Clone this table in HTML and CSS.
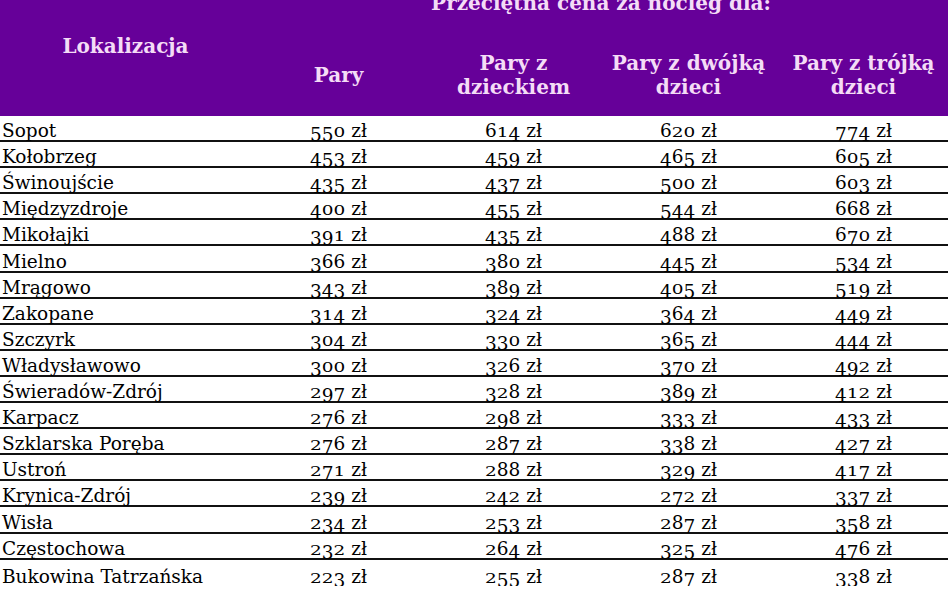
FILE: index.html
```html
<!DOCTYPE html>
<html lang="pl">
<head>
<meta charset="utf-8">
<title>Przeciętna cena za nocleg</title>
<link rel="stylesheet" href="styles.css">
</head>
<body>
<div class="sheet">
  <div class="head">
    <div class="loc">Lokalizacja</div>
    <div class="group">
      <div class="title">Przeciętna cena za nocleg dla:</div>
      <div class="subs">
        <div class="sub">Pary</div>
        <div class="sub">Pary z<br>dzieckiem</div>
        <div class="sub">Pary z dwójką<br>dzieci</div>
        <div class="sub">Pary z trójką<br>dzieci</div>
      </div>
    </div>
  </div>
  <div class="rows">
    <div class="row"><div class="name">Sopot</div><div class="num">550 zł</div><div class="num">614 zł</div><div class="num">620 zł</div><div class="num">774 zł</div></div>
    <div class="row"><div class="name">Kołobrzeg</div><div class="num">453 zł</div><div class="num">459 zł</div><div class="num">465 zł</div><div class="num">605 zł</div></div>
    <div class="row"><div class="name">Świnoujście</div><div class="num">435 zł</div><div class="num">437 zł</div><div class="num">500 zł</div><div class="num">603 zł</div></div>
    <div class="row"><div class="name">Międzyzdroje</div><div class="num">400 zł</div><div class="num">455 zł</div><div class="num">544 zł</div><div class="num">668 zł</div></div>
    <div class="row"><div class="name">Mikołajki</div><div class="num">391 zł</div><div class="num">435 zł</div><div class="num">488 zł</div><div class="num">670 zł</div></div>
    <div class="row"><div class="name">Mielno</div><div class="num">366 zł</div><div class="num">380 zł</div><div class="num">445 zł</div><div class="num">534 zł</div></div>
    <div class="row"><div class="name">Mrągowo</div><div class="num">343 zł</div><div class="num">389 zł</div><div class="num">405 zł</div><div class="num">519 zł</div></div>
    <div class="row"><div class="name">Zakopane</div><div class="num">314 zł</div><div class="num">324 zł</div><div class="num">364 zł</div><div class="num">449 zł</div></div>
    <div class="row"><div class="name">Szczyrk</div><div class="num">304 zł</div><div class="num">330 zł</div><div class="num">365 zł</div><div class="num">444 zł</div></div>
    <div class="row"><div class="name">Władysławowo</div><div class="num">300 zł</div><div class="num">326 zł</div><div class="num">370 zł</div><div class="num">492 zł</div></div>
    <div class="row"><div class="name">Świeradów-Zdrój</div><div class="num">297 zł</div><div class="num">328 zł</div><div class="num">389 zł</div><div class="num">412 zł</div></div>
    <div class="row"><div class="name">Karpacz</div><div class="num">276 zł</div><div class="num">298 zł</div><div class="num">333 zł</div><div class="num">433 zł</div></div>
    <div class="row"><div class="name">Szklarska Poręba</div><div class="num">276 zł</div><div class="num">287 zł</div><div class="num">338 zł</div><div class="num">427 zł</div></div>
    <div class="row"><div class="name">Ustroń</div><div class="num">271 zł</div><div class="num">288 zł</div><div class="num">329 zł</div><div class="num">417 zł</div></div>
    <div class="row"><div class="name">Krynica-Zdrój</div><div class="num">239 zł</div><div class="num">242 zł</div><div class="num">272 zł</div><div class="num">337 zł</div></div>
    <div class="row"><div class="name">Wisła</div><div class="num">234 zł</div><div class="num">253 zł</div><div class="num">287 zł</div><div class="num">358 zł</div></div>
    <div class="row"><div class="name">Częstochowa</div><div class="num">232 zł</div><div class="num">264 zł</div><div class="num">325 zł</div><div class="num">476 zł</div></div>
    <div class="row"><div class="name">Bukowina Tatrzańska</div><div class="num">223 zł</div><div class="num">255 zł</div><div class="num">287 zł</div><div class="num">338 zł</div></div>
  </div>
</div>
<script src="script.js"></script>
</body>
</html>
```
FILE: styles.css
```css
html, body {
  margin: 0;
  padding: 0;
  background: #ffffff;
}
body {
  overflow: hidden;
  font-family: "DejaVu Serif", "Liberation Serif", serif;
  color: #000000;
}
.sheet {
  width: 951px;
}
.head {
  display: grid;
  grid-template-columns: 251px 700px;
  background: #660099;
  color: #f4dcf6;
  font-weight: bold;
  font-size: 20px;
  margin-top: -24px;
  height: 140px;
}
.loc {
  display: flex;
  align-items: center;
  justify-content: center;
}
.group {
  display: grid;
  grid-template-rows: 54px 86px;
}
.title {
  display: flex;
  align-items: center;
  justify-content: center;
}
.subs {
  display: grid;
  grid-template-columns: repeat(4, 175px);
}
.sub {
  display: flex;
  align-items: center;
  justify-content: center;
  text-align: center;
  line-height: 24px;
  padding-top: 4px;
}
.row {
  display: grid;
  grid-template-columns: 251px repeat(4, 175px);
  height: 26.1px;
  box-sizing: border-box;
  border-bottom: 2px solid #111111;
  font-size: 18.5px;
  line-height: 19px;
  align-items: end;
}
.row:last-child {
  border-bottom: none;
}
.name {
  padding-left: 2px;
  white-space: nowrap;
}
.num {
  text-align: center;
  white-space: nowrap;
}
.d-low {
  display: inline-block;
  transform: scaleY(0.74);
  transform-origin: 50% 80%;
}
.d-desc {
  display: inline-block;
  transform: translateY(0.2em);
}
```
FILE: script.js
```js
document.querySelectorAll('.num').forEach(function (cell) {
  var text = cell.textContent;
  var parts = text.split(' ');
  var digits = parts[0];
  var html = '';
  for (var i = 0; i < digits.length; i++) {
    var c = digits[i];
    if ('012'.indexOf(c) >= 0) html += '<span class="d-low">' + c + '</span>';
    else if ('34579'.indexOf(c) >= 0) html += '<span class="d-desc">' + c + '</span>';
    else html += c;
  }
  cell.innerHTML = html + ' ' + parts.slice(1).join(' ');
});
```
